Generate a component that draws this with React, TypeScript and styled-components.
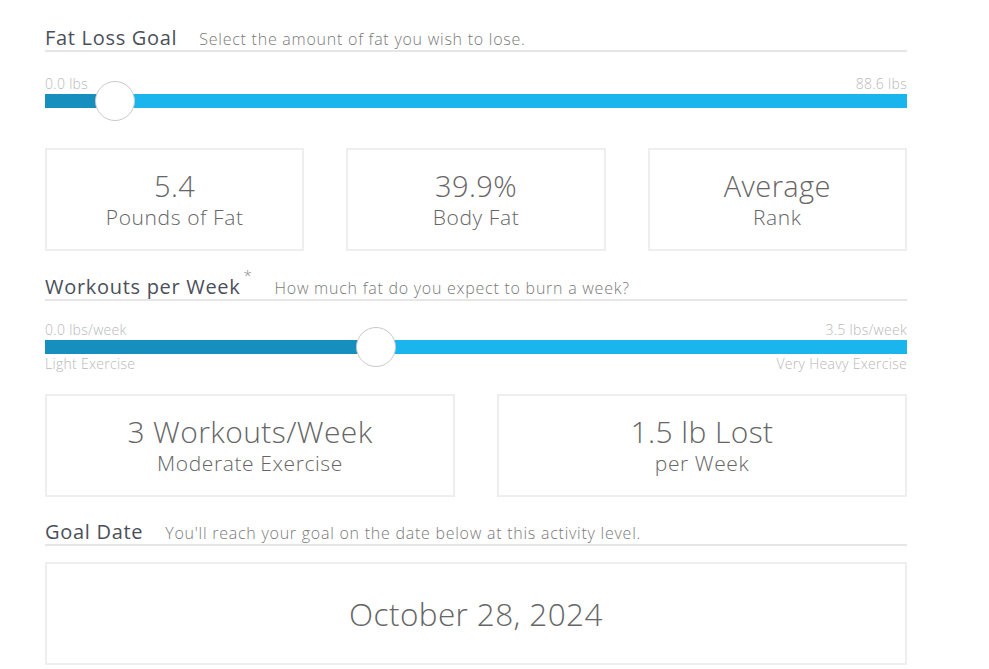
import React from "react";
import styled, { createGlobalStyle } from "styled-components";

const Global = createGlobalStyle`
  html, body { margin: 0; padding: 0; background: #fff; }
  body { font-family: "Open Sans", Lato, sans-serif; color: #555; }
  * { box-sizing: border-box; }
`;

const Page = styled.div`
  width: 989px;
  height: 669px;
  overflow: hidden;
  padding: 25px 0 0 45px;
`;

const Column = styled.div`
  width: 862px;
  display: flex;
  flex-direction: column;
`;

const SectionHead = styled.div<{ $mt?: number }>`
  display: flex;
  align-items: baseline;
  gap: 22px;
  border-bottom: 2px solid #e6e6e6;
  height: 27px;
  margin-top: ${(p) => p.$mt ?? 0}px;
`;

const Title = styled.h2`
  margin: 0;
  font-size: 20px;
  font-weight: 400;
  color: #4b4f5a;
  line-height: 26px;
  letter-spacing: 0.7px;
  display: flex;
  align-items: flex-start;
`;

const Star = styled.span`
  font-size: 15px;
  font-weight: 300;
  color: #888;
  line-height: 12px;
  margin-left: 3px;
  margin-top: -5px;
`;

const Subtitle = styled.span`
  font-size: 16px;
  font-weight: 300;
  color: #7a7a7a;
  letter-spacing: 0.75px;
`;

const SliderBlock = styled.div<{ $mt: number }>`
  margin-top: ${(p) => p.$mt}px;
  display: flex;
  flex-direction: column;
`;

const LabelRow = styled.div`
  display: flex;
  justify-content: space-between;
  font-size: 14px;
  font-weight: 300;
  color: #b8b8b8;
  line-height: 16px;
  letter-spacing: 0.3px;
`;

const Track = styled.div`
  position: relative;
  height: 14px;
  margin: 2px 0 2px;
  background: #1ab5ec;
`;

const Fill = styled.div`
  position: absolute;
  left: 0;
  top: 0;
  bottom: 0;
  background: #168fbf;
`;

const Thumb = styled.div`
  position: absolute;
  top: 50%;
  width: 40px;
  height: 40px;
  margin: -20px 0 0 -20px;
  border-radius: 50%;
  background: #fff;
  border: 1px solid #c9c9c9;
`;

const CardRow = styled.div<{ $cols: number; $mt: number }>`
  display: grid;
  grid-template-columns: repeat(${(p) => p.$cols}, 1fr);
  column-gap: 42px;
  margin-top: ${(p) => p.$mt}px;
`;

const Card = styled.div`
  height: 103px;
  border: 2px solid #eeeeee;
  display: flex;
  flex-direction: column;
  align-items: center;
  justify-content: center;
  color: #666;
  font-weight: 300;
`;

const Big = styled.div<{ $size?: number }>`
  font-size: ${(p) => p.$size ?? 29}px;
  line-height: 35px;
  letter-spacing: 0.4px;
`;

const Small = styled.div`
  font-size: 21px;
  line-height: 28px;
  letter-spacing: 0.6px;
`;

function Slider({ pct, left, right, below }: { pct: number; left: string; right: string; below?: [string, string] }) {
  return (
    <>
      <LabelRow>
        <span>{left}</span>
        <span>{right}</span>
      </LabelRow>
      <Track>
        <Fill style={{ width: `${pct}%` }} />
        <Thumb style={{ left: `${pct}%` }} />
      </Track>
      {below && (
        <LabelRow>
          <span>{below[0]}</span>
          <span>{below[1]}</span>
        </LabelRow>
      )}
    </>
  );
}

export default function App() {
  return (
    <Page>
      <Global />
      <Column>
        <SectionHead>
          <Title>Fat Loss Goal</Title>
          <Subtitle>Select the amount of fat you wish to lose.</Subtitle>
        </SectionHead>
        <SliderBlock $mt={24}>
          <Slider pct={8.1} left="0.0 lbs" right="88.6 lbs" />
        </SliderBlock>
        <CardRow $cols={3} $mt={38}>
          <Card>
            <Big>5.4</Big>
            <Small>Pounds of Fat</Small>
          </Card>
          <Card>
            <Big>39.9%</Big>
            <Small>Body Fat</Small>
          </Card>
          <Card>
            <Big>Average</Big>
            <Small>Rank</Small>
          </Card>
        </CardRow>
        <SectionHead $mt={23}>
          <Title>
            Workouts per Week<Star>*</Star>
          </Title>
          <Subtitle>How much fat do you expect to burn a week?</Subtitle>
        </SectionHead>
        <SliderBlock $mt={21}>
          <Slider pct={38.4} left="0.0 lbs/week" right="3.5 lbs/week" below={["Light Exercise", "Very Heavy Exercise"]} />
        </SliderBlock>
        <CardRow $cols={2} $mt={22}>
          <Card>
            <Big $size={30}>3 Workouts/Week</Big>
            <Small>Moderate Exercise</Small>
          </Card>
          <Card>
            <Big $size={30}>1.5 lb Lost</Big>
            <Small>per Week</Small>
          </Card>
        </CardRow>
        <SectionHead $mt={22}>
          <Title>Goal Date</Title>
          <Subtitle>You'll reach your goal on the date below at this activity level.</Subtitle>
        </SectionHead>
        <CardRow $cols={1} $mt={16}>
          <Card>
            <Big $size={31.5}>October 28, 2024</Big>
          </Card>
        </CardRow>
      </Column>
    </Page>
  );
}
